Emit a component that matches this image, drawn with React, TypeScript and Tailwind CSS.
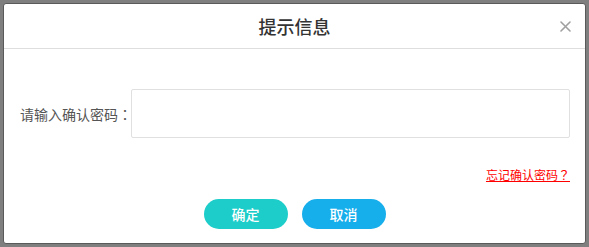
import React from "react";

const tc = { fontFamily: '"Noto Sans CJK TC", sans-serif' };

export default function App() {
  return (
    <div
      className="w-[589px] h-[247px] bg-[#7f7f7f] p-[3px]"
      style={{ fontFamily: '"Noto Sans CJK SC", "Noto Sans", sans-serif' }}
    >
      <div className="h-[241px] w-[583px] border border-[#5a5a5a] rounded-[3px] bg-white flex flex-col">
        <div className="relative h-[45px] border-b border-[#dedede] flex items-center justify-center">
          <span className="text-[18px] font-medium text-[#333] leading-none">提示信息</span>
          <svg className="absolute right-[14px] top-[17px]" width="11" height="11" viewBox="0 0 11 11">
            <path d="M1 1 L10 10 M10 1 L1 10" stroke="#a0a0a0" strokeWidth="1.6" strokeLinecap="round" />
          </svg>
        </div>
        <div className="flex flex-col pl-[16px] pr-[15px]">
          <div className="mt-[40px] flex items-center">
            <span className="w-[111px] whitespace-nowrap text-[14px] text-[#555] leading-none">
              请输入确认密码<span style={tc}>：</span>
            </span>
            <div className="h-[49px] flex-1 border border-[#e0e0e0] rounded-[2px]" />
          </div>
          <div className="mt-[30px] flex justify-end">
            <span className="text-[12px] leading-[14px] text-[#ff0000] underline whitespace-nowrap">
              忘记确认密码<span style={tc}>？</span>
            </span>
          </div>
        </div>
        <div className="mt-[17px] flex justify-center gap-[14px]">
          <button className="w-[84px] h-[30px] rounded-full bg-[#1ccdc9] text-white text-[14px] font-medium">确定</button>
          <button className="w-[84px] h-[30px] rounded-full bg-[#17aeec] text-white text-[14px] font-medium">取消</button>
        </div>
      </div>
    </div>
  );
}
